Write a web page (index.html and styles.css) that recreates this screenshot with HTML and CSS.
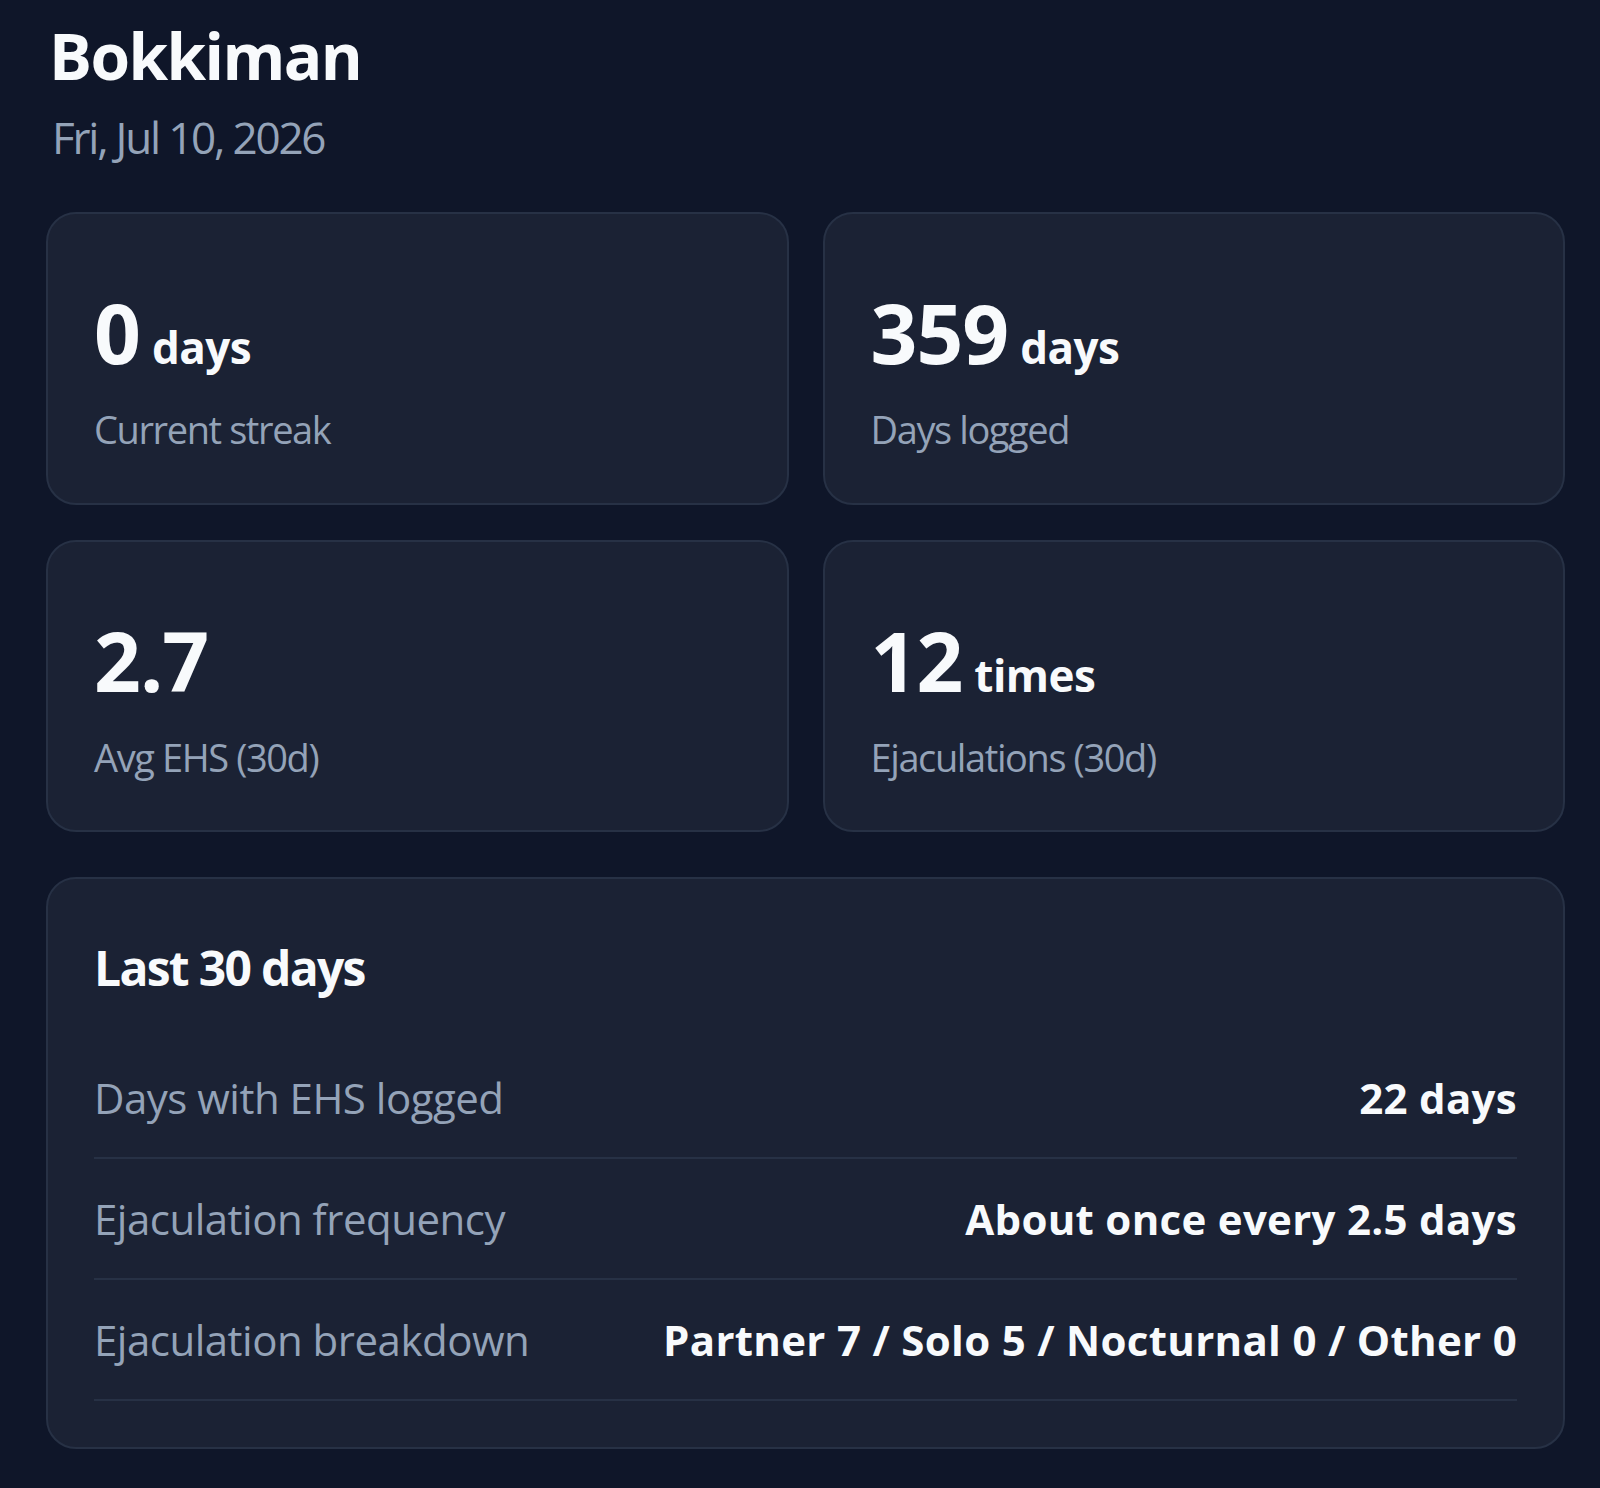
FILE: index.html
```html
<!DOCTYPE html>
<html lang="en">
<head>
    <meta charset="UTF-8">
    <meta name="viewport" content="width=device-width, initial-scale=1.0">
    <title>Bokkiman - Dashboard</title>
    <link rel="stylesheet" href="styles.css">
</head>
<body>
    <main class="page">
        <header class="page-header">
            <h1>Bokkiman</h1>
            <p class="today">Fri, Jul 10, 2026</p>
        </header>

        <!-- Cartes de stats -->
        <section class="stats-grid">
            <div class="stat-card">
                <div class="stat-value">0<span class="unit">days</span></div>
                <div class="stat-label">Current streak</div>
            </div>
            <div class="stat-card">
                <div class="stat-value">359<span class="unit">days</span></div>
                <div class="stat-label">Days logged</div>
            </div>
            <div class="stat-card">
                <div class="stat-value">2.7</div>
                <div class="stat-label">Avg EHS (30d)</div>
            </div>
            <div class="stat-card">
                <div class="stat-value">12<span class="unit">times</span></div>
                <div class="stat-label">Ejaculations (30d)</div>
            </div>
        </section>

        <!-- Résumé 30 jours -->
        <section class="summary-card">
            <h2>Last 30 days</h2>
            <div class="summary-row">
                <span class="row-label">Days with EHS logged</span>
                <span class="row-value">22 days</span>
            </div>
            <div class="summary-row">
                <span class="row-label">Ejaculation frequency</span>
                <span class="row-value">About once every 2.5 days</span>
            </div>
            <div class="summary-row">
                <span class="row-label">Ejaculation breakdown</span>
                <span class="row-value">Partner 7 / Solo 5 / Nocturnal 0 / Other 0</span>
            </div>
        </section>
    </main>
</body>
</html>
```

FILE: styles.css
```css
body {
    font-family: "Open Sans", "Noto Sans", sans-serif;
    margin: 0;
    padding: 0;
    background: #0f1629;
    color: #f8fafc;
}
.page {
    padding: 18px 35px 38px 46px;
}
.page-header {
    padding-left: 3px;
    margin-bottom: 46px;
}
.page-header h1 {
    margin: 0;
    font-size: 64px;
    font-weight: 700;
    line-height: 1.2;
    letter-spacing: -1.6px;
}
.today {
    margin: 14px 0 0;
    padding-left: 3px;
    font-size: 44px;
    line-height: 1.3;
    color: #94a3b8;
    letter-spacing: -2.2px;
}
.stats-grid {
    display: grid;
    grid-template-columns: 1fr 1fr;
    column-gap: 34px;
    row-gap: 35px;
}
.stat-card {
    background: #1b2234;
    border: 2px solid #273145;
    border-radius: 30px;
    padding: 73px 46px 48px;
}
.stat-value {
    font-size: 82px;
    font-weight: 700;
    line-height: 1.1;
    letter-spacing: -1px;
}
.stat-value .unit {
    margin-left: 12px;
    font-size: 44px;
    letter-spacing: -0.5px;
}
.stat-label {
    margin-top: 28px;
    font-size: 38px;
    line-height: 1.3;
    color: #94a3b8;
    letter-spacing: -1.4px;
}
.summary-card {
    margin-top: 45px;
    background: #1b2234;
    border: 2px solid #273145;
    border-radius: 30px;
    padding: 60px 46px 46px;
}
.summary-card h2 {
    margin: 0 0 41px;
    font-size: 48px;
    font-weight: 700;
    line-height: 1.2;
    letter-spacing: -1.7px;
}
.summary-row {
    display: flex;
    justify-content: space-between;
    align-items: center;
    padding: 30px 0;
    border-bottom: 2px solid #273145;
    font-size: 42px;
    line-height: 59px;
}
.row-label {
    color: #94a3b8;
    letter-spacing: -0.5px;
}
.row-value {
    font-weight: 700;
    color: #f8fafc;
    letter-spacing: 0.3px;
}
```
